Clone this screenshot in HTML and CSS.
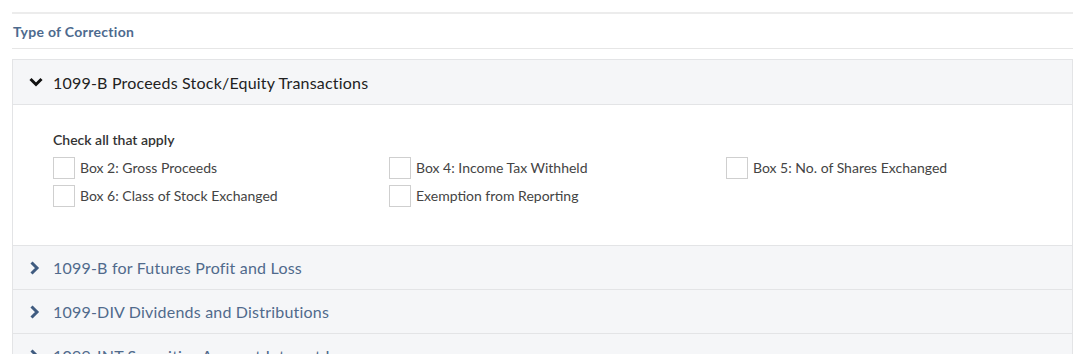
FILE: index.html
```html
<!DOCTYPE html>
<html lang="en">
<head>
    <meta charset="UTF-8">
    <title>Type of Correction</title>
    <link rel="stylesheet" href="styles.css">
</head>
<body>
    <div class="section">
        <h4 class="section-title">Type of Correction</h4>

        <div class="accordion">
            <div class="acc-item open">
                <div class="acc-header">
                    <svg class="chev" width="14" height="10" viewBox="0 0 14 10"><path d="M1.5 2 L7 7.5 L12.5 2" fill="none" stroke="currentColor" stroke-width="3"/></svg>
                    <span>1099-B Proceeds Stock/Equity Transactions</span>
                </div>
                <div class="acc-body">
                    <p class="hint">Check all that apply</p>
                    <div class="check-grid">
                        <label class="check"><span class="box"></span>Box 2: Gross Proceeds</label>
                        <label class="check"><span class="box"></span>Box 4: Income Tax Withheld</label>
                        <label class="check"><span class="box"></span>Box 5: No. of Shares Exchanged</label>
                        <label class="check"><span class="box"></span>Box 6: Class of Stock Exchanged</label>
                        <label class="check"><span class="box"></span>Exemption from Reporting</label>
                    </div>
                </div>
            </div>
            <div class="acc-item">
                <div class="acc-header">
                    <svg class="chev" width="14" height="14" viewBox="0 0 14 14"><path d="M2.5 1.5 L8 7 L2.5 12.5" fill="none" stroke="currentColor" stroke-width="3"/></svg>
                    <span>1099-B for Futures Profit and Loss</span>
                </div>
            </div>
            <div class="acc-item">
                <div class="acc-header">
                    <svg class="chev" width="14" height="14" viewBox="0 0 14 14"><path d="M2.5 1.5 L8 7 L2.5 12.5" fill="none" stroke="currentColor" stroke-width="3"/></svg>
                    <span>1099-DIV Dividends and Distributions</span>
                </div>
            </div>
            <div class="acc-item">
                <div class="acc-header">
                    <svg class="chev" width="14" height="14" viewBox="0 0 14 14"><path d="M2.5 1.5 L8 7 L2.5 12.5" fill="none" stroke="currentColor" stroke-width="3"/></svg>
                    <span>1099-INT Securities Account Interest Income</span>
                </div>
            </div>
        </div>
    </div>
</body>
</html>
```

FILE: styles.css
```css
body {
    margin: 0;
    padding: 12px 3px 0 12px;
    font-family: Lato, "Open Sans", Arial, sans-serif;
    color: #333;
    background: #fff;
    overflow: hidden;
}

.section {
    border-top: 2px solid #ececec;
}

.section-title {
    margin: 0;
    padding: 9px 0 8px 1px;
    font-size: 14px;
    letter-spacing: 0.3px;
    font-weight: bold;
    color: #4d6a8e;
    border-bottom: 1px solid #e6e6e6;
    line-height: 17px;
}

.accordion {
    margin-top: 10px;
    border: 1px solid #e3e4e6;
    border-bottom: none;
}

.acc-item {
    border-bottom: 1px solid #e3e4e6;
}

.acc-header {
    display: flex;
    align-items: center;
    height: 43px;
    padding-left: 16px;
    background: #f5f6f8;
    font-size: 16px;
    letter-spacing: 0.2px;
    color: #506a8c;
}

.acc-header .chev {
    margin-right: 10px;
    color: #3f5b80;
}

.open .acc-header {
    height: 44px;
    color: #222;
    border-bottom: 1px solid #e3e4e6;
}

.open .acc-header .chev {
    color: #111;
}

.acc-body {
    background: #fff;
    padding: 26px 40px 38px 40px;
}

.hint {
    margin: 0 0 8px 0;
    font-size: 14px;
    line-height: 18px;
    font-weight: 600;
    color: #333;
}

.check-grid {
    display: grid;
    grid-template-columns: 336px 337px 1fr;
    row-gap: 6px;
}

.check {
    display: flex;
    align-items: center;
    font-size: 14px;
    line-height: 18px;
    color: #444;
}

.box {
    width: 20px;
    height: 20px;
    border: 1px solid #cfcfcf;
    margin-right: 5px;
    background: #fff;
}
```
